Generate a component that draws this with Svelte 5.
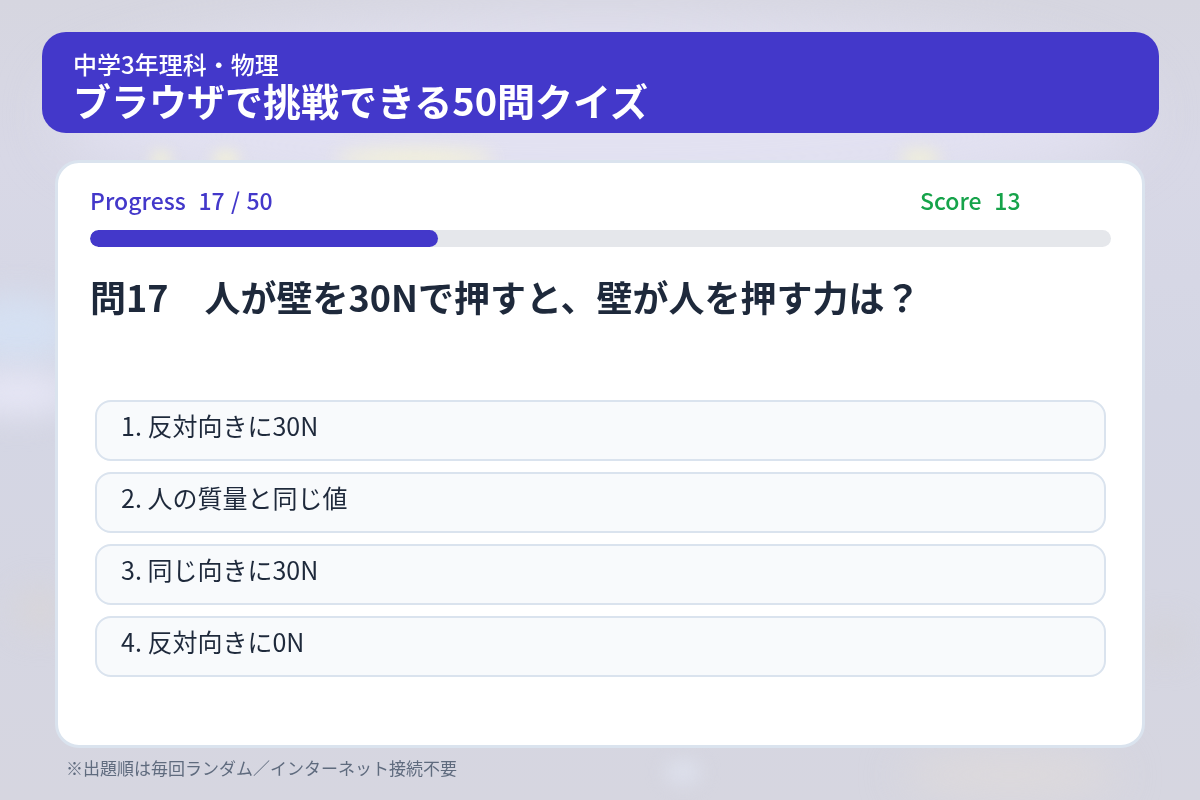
<script>
    const progress = 17;
    const total = 50;
    const score = 13;
    const choices = ['反対向きに30N', '人の質量と同じ値', '同じ向きに30N', '反対向きに0N'];
    let percent = 34.1;
</script>

<div class="bg" aria-hidden="true">
    <div class="blob glow"></div>
    <div class="blob lit1"></div>
    <div class="blob lit2"></div>
    <div class="blob lit3"></div>
    <div class="blob lit4"></div>
    <div class="blob sky"></div>
    <div class="blob lav"></div>
    <div class="blob warm1"></div>
    <div class="blob warm2"></div>
    <div class="blob warm3"></div>
    <div class="blob pale"></div>
</div>

<main class="page">
    <header class="banner">
        <div class="subtitle">中学3年理科・物理</div>
        <h1>ブラウザで挑戦できる50問クイズ</h1>
    </header>

    <section class="card">
        <div class="status">
            <span class="progress-label">Progress&nbsp; {progress} / {total}</span>
            <span class="score-label">Score&nbsp; {score}</span>
        </div>
        <div class="track"><div class="fill" style="width: {percent}%"></div></div>

        <h2 class="question">問{progress}　人が壁を30Nで押すと、壁が人を押す力は？</h2>

        <div class="choices">
            {#each choices as choice, i}
                <button class="choice">{i + 1}. {choice}</button>
            {/each}
        </div>
    </section>

    <p class="note">※出題順は毎回ランダム／インターネット接続不要</p>
</main>

<style>
    :global(body) {
        margin: 0;
        background: #d6d6e2;
        font-family: "Noto Sans CJK JP", "Noto Sans", sans-serif;
        overflow: hidden;
    }

    /* blurred photo behind the page */
    .bg {
        position: fixed;
        inset: 0;
        overflow: hidden;
        background: linear-gradient(180deg, #d6d6e0 0%, #d8d8e6 20%, #d4d6e4 50%, #d6d6e0 100%);
    }
    .blob {
        position: absolute;
        border-radius: 50%;
        filter: blur(16px);
    }
    .glow { left: 60px; top: 20px; width: 1080px; height: 190px; background: #e2e1f1; filter: blur(30px); }
    .lit1 { left: 150px; top: 150px; width: 22px; height: 18px; background: #efeedb; filter: blur(7px); }
    .lit2 { left: 212px; top: 150px; width: 28px; height: 18px; background: #f1efda; filter: blur(7px); }
    .lit3 { left: 335px; top: 148px; width: 160px; height: 20px; background: #f3f1da; filter: blur(9px); }
    .lit4 { left: 900px; top: 148px; width: 40px; height: 20px; background: #efeeda; filter: blur(8px); }
    .sky { left: -40px; top: 295px; width: 115px; height: 70px; background: #d5e0f2; }
    .lav { left: -40px; top: 372px; width: 115px; height: 42px; background: #e7e7f6; }
    .warm1 { left: 900px; top: 755px; width: 220px; height: 40px; background: #dedadb; filter: blur(20px); }
    .warm2 { left: 15px; top: 590px; width: 50px; height: 40px; background: #d8d5d8; }
    .warm3 { left: 1145px; top: 625px; width: 40px; height: 30px; background: #d3d2d7; }
    .pale { left: 665px; top: 760px; width: 36px; height: 24px; background: #dde0ec; filter: blur(9px); }

    .page {
        position: relative;
        height: 800px;
        box-sizing: border-box;
        padding-top: 32px;
    }

    .banner {
        box-sizing: border-box;
        height: 101px;
        margin: 0 41px 0 42px;
        padding: 16px 31px 0;
        background: #4338ca;
        border-radius: 24px;
        color: #fff;
    }
    .subtitle {
        font-size: 24px;
        font-weight: 500;
        line-height: 32px;
    }
    .banner h1 {
        margin: 0;
        font-size: 38px;
        font-weight: 700;
        line-height: 40px;
    }

    .card {
        box-sizing: border-box;
        height: 588px;
        margin: 27px 55px 0;
        padding: 19px 31px 0 32px;
        background: #fff;
        border: 3px solid #dae3ee;
        border-radius: 24px;
    }
    .status {
        display: flex;
        height: 36px;
        align-items: center;
        font-size: 23px;
        font-weight: 500;
        word-spacing: 1.2px;
    }
    .progress-label { color: #4338ca; width: 830px; }
    .score-label { color: #16a34a; }

    .track {
        height: 17px;
        margin-top: 12px;
        background: #e5e7eb;
        border-radius: 9px;
        overflow: hidden;
    }
    .fill {
        height: 100%;
        background: #4338ca;
        border-radius: 9px;
    }

    .question {
        margin: 24px 0 0;
        color: #1e293b;
        font-size: 36px;
        font-weight: 700;
        line-height: 50px;
    }

    .choices {
        display: flex;
        flex-direction: column;
        gap: 11px;
        margin: 79px 5px 0;
    }
    .choice {
        box-sizing: border-box;
        height: 61px;
        padding: 0 24px 12px;
        background: #f8fafc;
        border: 2px solid #dae3ee;
        border-radius: 16px;
        color: #1e293b;
        font-family: inherit;
        font-size: 25px;
        text-align: left;
    }

    .note {
        margin: 6px 0 0 66px;
        color: #5f6b7e;
        font-size: 17px;
        line-height: 28px;
    }
</style>
